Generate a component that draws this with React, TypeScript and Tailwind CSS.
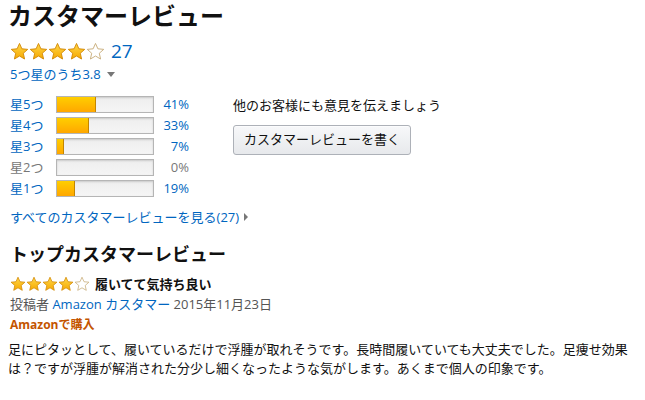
import { useId } from "react";

const FONT = "font-['Open_Sans',_'Noto_Sans_CJK_JP',_sans-serif]";

const BARS = [
  { label: "星5つ", pct: 41, active: true },
  { label: "星4つ", pct: 33, active: true },
  { label: "星3つ", pct: 7, active: true },
  { label: "星2つ", pct: 0, active: false },
  { label: "星1つ", pct: 19, active: true },
];

function Star({ filled, size }: { filled: boolean; size: number }) {
  const id = useId();
  return (
    <svg width={size} height={size} viewBox="0 0 24 24" className="block">
      <defs>
        <linearGradient id={id} x1="0" y1="0" x2="0" y2="1">
          <stop offset="0" stopColor="#ffd84a" />
          <stop offset="1" stopColor="#f6a800" />
        </linearGradient>
      </defs>
      <polygon
        points="12,1.8 15,8.6 22.4,9.3 16.8,14.2 18.4,21.5 12,17.7 5.6,21.5 7.2,14.2 1.6,9.3 9,8.6"
        fill={filled ? `url(#${id})` : "#ffffff"}
        stroke={filled ? "#d38a08" : "#c9ae7c"}
        strokeWidth="1.2"
        strokeLinejoin="round"
      />
    </svg>
  );
}

function Stars({ count, size }: { count: number; size: number }) {
  return (
    <div className="flex">
      {[0, 1, 2, 3, 4].map((i) => (
        <Star key={i} filled={i < count} size={size} />
      ))}
    </div>
  );
}

function RatingBar({ label, pct, active }: { label: string; pct: number; active: boolean }) {
  const color = active ? "text-[#0066c0]" : "text-[#777]";
  return (
    <div className="flex items-center h-[21px] text-[13px]">
      <span className={`w-[46px] ${color}`}>{label}</span>
      <div className="w-[98px] h-[17px] border border-[#b5b5b5] bg-gradient-to-b from-[#eeeeee] to-[#f5f5f5] shadow-[inset_0_1px_2px_rgba(0,0,0,0.15)]">
        {pct > 0 && (
          <div
            className="h-full bg-gradient-to-b from-[#ffce00] to-[#ffa700] border-r border-[#c38600]"
            style={{ width: `${pct}%` }}
          />
        )}
      </div>
      <span className={`w-[35px] text-right ${color}`}>{pct}%</span>
    </div>
  );
}

export default function App() {
  return (
    <div className={`w-[645px] h-[400px] bg-white px-2 text-[#111] ${FONT}`}>
      <h2 className="text-[24px] font-bold leading-[32px]">カスタマーレビュー</h2>

      <div className="flex items-center gap-[6px] mt-[8px] ml-[2px]">
        <Stars count={4} size={19} />
        <span className="text-[19px] leading-[22px] text-[#0066c0]">27</span>
      </div>
      <div className="flex items-center gap-[6px] mt-[2px] ml-[2px] text-[13px] leading-[20px] text-[#0066c0]">
        <span>5つ星のうち3.8</span>
        <span className="w-0 h-0 border-l-[4px] border-r-[4px] border-t-[5px] border-l-transparent border-r-transparent border-t-[#777]" />
      </div>

      <div className="flex mt-[10px] ml-[2px]">
        <div className="flex flex-col w-[223px]">
          {BARS.map((b) => (
            <RatingBar key={b.label} {...b} />
          ))}
        </div>
        <div className="flex flex-col items-start pt-[1px]">
          <p className="text-[13px] leading-[20px]">他のお客様にも意見を伝えましょう</p>
          <button className="mt-[10px] w-[178px] h-[30px] rounded-[3px] border border-[#adb1b8] bg-gradient-to-b from-[#f7f8fa] to-[#e7e9ec] text-[13px] text-[#111] shadow-[0_1px_0_rgba(255,255,255,0.6)_inset]">
            カスタマーレビューを書く
          </button>
        </div>
      </div>

      <div className="flex items-center gap-[5px] mt-[8px] ml-[2px] text-[13px] leading-[20px] text-[#0066c0]">
        <span>すべてのカスタマーレビューを見る(27)</span>
        <span className="w-0 h-0 border-t-[4px] border-b-[4px] border-l-[4px] border-t-transparent border-b-transparent border-l-[#777]" />
      </div>

      <h3 className="mt-[15px] ml-[2px] text-[18px] font-bold leading-[24px]">トップカスタマーレビュー</h3>

      <div className="flex items-center gap-[5px] mt-[8px] ml-[2px]">
        <Stars count={4} size={16} />
        <span className="text-[13px] font-bold leading-[20px]">履いてて気持ち良い</span>
      </div>
      <div className="ml-[2px] text-[13px] leading-[21px] text-[#555]">
        投稿者 <span className="text-[#0066c0]">Amazon カスタマー</span> 2015年11月23日
      </div>
      <div className="ml-[2px] text-[12px] font-bold leading-[20px] text-[#c45500]">Amazonで購入</div>

      <p className="mt-[5px] text-[13px] leading-[19px] text-[#111]">
        足にピタッとして、履いているだけで浮腫が取れそうです。長時間履いていても大丈夫でした。足痩せ効果は？ですが浮腫が解消された分少し細くなったような気がします。あくまで個人の印象です。
      </p>
    </div>
  );
}
